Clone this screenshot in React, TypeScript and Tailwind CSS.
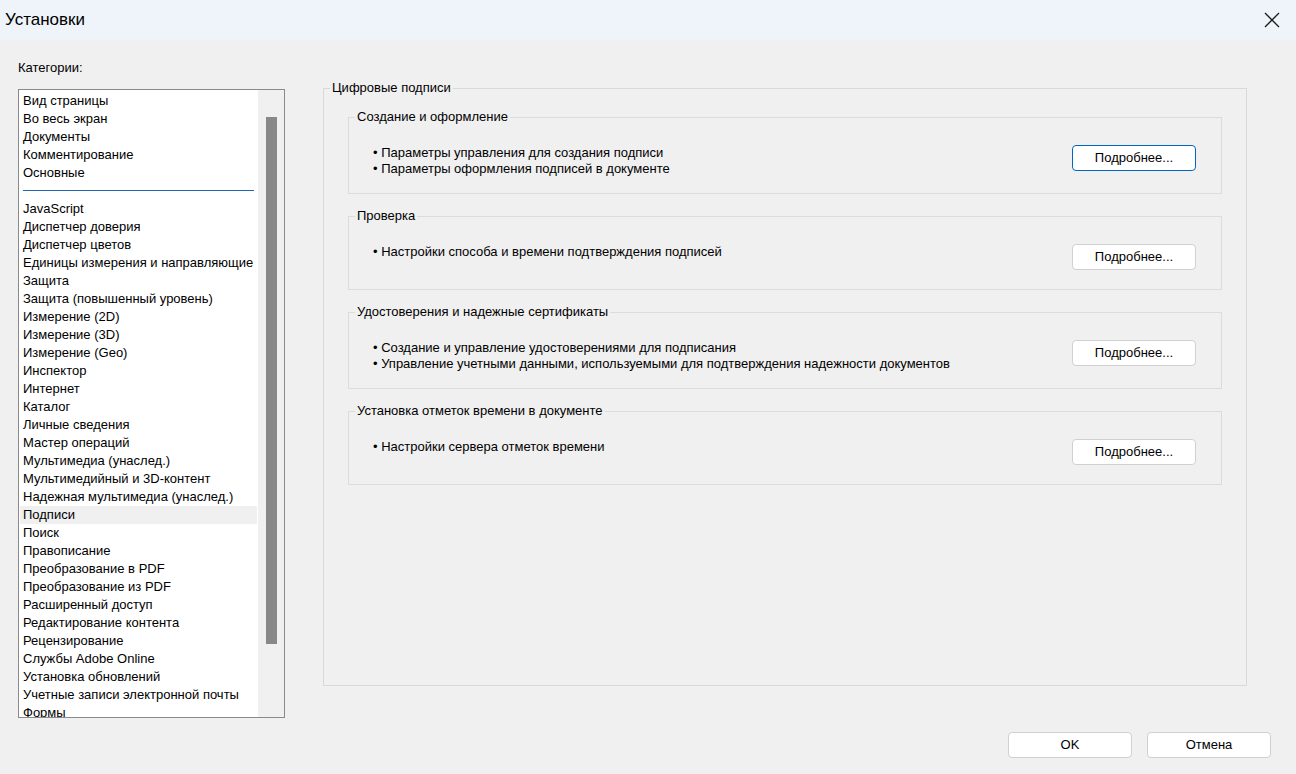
import React from "react";

const topCategories = ["Вид страницы", "Во весь экран", "Документы", "Комментирование", "Основные"];

const categories = [
  "JavaScript",
  "Диспетчер доверия",
  "Диспетчер цветов",
  "Единицы измерения и направляющие",
  "Защита",
  "Защита (повышенный уровень)",
  "Измерение (2D)",
  "Измерение (3D)",
  "Измерение (Geo)",
  "Инспектор",
  "Интернет",
  "Каталог",
  "Личные сведения",
  "Мастер операций",
  "Мультимедиа (унаслед.)",
  "Мультимедийный и 3D-контент",
  "Надежная мультимедиа (унаслед.)",
  "Подписи",
  "Поиск",
  "Правописание",
  "Преобразование в PDF",
  "Преобразование из PDF",
  "Расширенный доступ",
  "Редактирование контента",
  "Рецензирование",
  "Службы Adobe Online",
  "Установка обновлений",
  "Учетные записи электронной почты",
  "Формы",
];

type Group = { title: string; lines: string[]; tall: boolean; focused?: boolean };

const groups: Group[] = [
  {
    title: "Создание и оформление",
    lines: ["Параметры управления для создания подписи", "Параметры оформления подписей в документе"],
    tall: true,
    focused: true,
  },
  {
    title: "Проверка",
    lines: ["Настройки способа и времени подтверждения подписей"],
    tall: false,
  },
  {
    title: "Удостоверения и надежные сертификаты",
    lines: [
      "Создание и управление удостоверениями для подписания",
      "Управление учетными данными, используемыми для подтверждения надежности документов",
    ],
    tall: true,
  },
  {
    title: "Установка отметок времени в документе",
    lines: ["Настройки сервера отметок времени"],
    tall: false,
  },
];

const CategoryItem = ({ label, selected }: { label: string; selected?: boolean }) => (
  <div className={selected ? "mx-[1px] h-[18px] bg-[#f0f0f0] pl-[3px] leading-[18px] whitespace-nowrap" : "h-[18px] pl-[4px] leading-[18px] whitespace-nowrap"}>
    {label}
  </div>
);

const SettingsGroup = ({ group }: { group: Group }) => (
  <fieldset className={`border border-[#dcdcdc] ${group.tall ? "h-[85px]" : "h-[82px]"}`}>
    <legend className="ml-[6px] px-[2px] leading-[16px]">{group.title}</legend>
    <div className="flex items-start justify-between">
      <div className="pl-[24px] pt-[20px] leading-[16px]">
        {group.lines.map((line) => (
          <div key={line}>• {line}</div>
        ))}
      </div>
      <button
        className={`mr-[25px] mt-[20px] h-[26px] w-[124px] shrink-0 rounded-[4px] border bg-white leading-[24px] ${
          group.focused ? "border-[#0067c0]" : "border-[#d0d0d0]"
        }`}
      >
        Подробнее...
      </button>
    </div>
  </fieldset>
);

export default function App() {
  return (
    <div className="flex h-[774px] w-[1296px] flex-col overflow-hidden bg-[#f0f0f0] font-['Liberation_Sans',Arial,sans-serif] text-[13px] text-black">
      <header className="flex h-[40px] shrink-0 items-center justify-between bg-[#eef4f9] pl-[5px] pr-[15px]">
        <h1 className="text-[17px] leading-[20px]">Установки</h1>
        <svg width="16" height="16" viewBox="0 0 16 16" className="mr-[1px]">
          <path d="M1 1 L15 15 M15 1 L1 15" stroke="#1a1a1a" strokeWidth="1.3" fill="none" />
        </svg>
      </header>

      <main className="flex h-[678px] shrink-0">
        <section className="pl-[18px] pt-[20px]">
          <div className="leading-[16px]">Категории:</div>
          <div className="mt-[13px] flex h-[629px] w-[267px] overflow-hidden border border-[#8a8a8a] bg-white">
            <div className="flex-1 overflow-hidden pt-[2px]">
              {topCategories.map((c) => (
                <CategoryItem key={c} label={c} />
              ))}
              <div className="h-[18px] px-[4px] pt-[8px]">
                <div className="h-[1px] bg-[#2167b0]" />
              </div>
              {categories.map((c) => (
                <CategoryItem key={c} label={c} selected={c === "Подписи"} />
              ))}
            </div>
            <div className="flex w-[26px] shrink-0 justify-center bg-[#f0f0f0]">
              <div className="mt-[27px] h-[527px] w-[11px] bg-[#888888]" />
            </div>
          </div>
        </section>

        <fieldset className="ml-[38px] mt-[40px] h-[606px] w-[924px] border border-[#d9d9d9]">
          <legend className="ml-[6px] px-[2px] leading-[16px]">Цифровые подписи</legend>
          <div className="flex flex-col gap-[14px] px-[24px] pt-[13px]">
            {groups.map((g) => (
              <SettingsGroup key={g.title} group={g} />
            ))}
          </div>
        </fieldset>
      </main>

      <footer className="mt-[14px] flex justify-end gap-[15px] pr-[25px]">
        <button className="h-[26px] w-[124px] rounded-[4px] border border-[#d0d0d0] bg-white">OK</button>
        <button className="h-[26px] w-[124px] rounded-[4px] border border-[#d0d0d0] bg-white">Отмена</button>
      </footer>
    </div>
  );
}
